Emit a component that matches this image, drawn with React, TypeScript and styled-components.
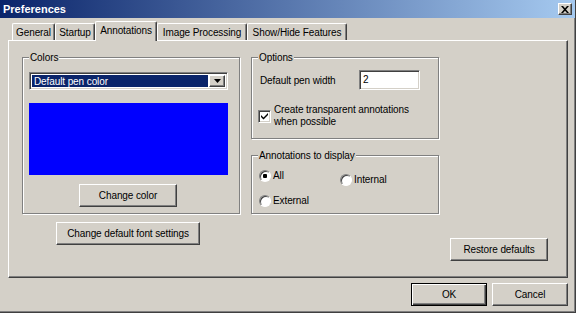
import styled, { createGlobalStyle } from "styled-components";

const GlobalStyle = createGlobalStyle`
  html, body {
    margin: 0;
    padding: 0;
    background: #d4d0c8;
  }
  body {
    font-family: "Liberation Sans", Arial, sans-serif;
    font-size: 10px;
    letter-spacing: -0.1px;
    color: #000;
  }
`;

const raised = `
  border: 1px solid;
  border-color: #fff #404040 #404040 #fff;
  box-shadow: inset -1px -1px 0 #808080;
`;

const sunken = `
  border: 1px solid;
  border-color: #808080 #fff #fff #808080;
  box-shadow: inset 1px 1px 0 #404040, inset -1px -1px 0 #d4d0c8;
`;

const tabs = [
  { label: "General", width: 43 },
  { label: "Startup", width: 40 },
  { label: "Annotations", width: 62, active: true },
  { label: "Image Processing", width: 90 },
  { label: "Show/Hide Features", width: 100 },
];

export default function App() {
  return (
    <>
      <GlobalStyle />
      <Window>
        <TitleBar>
          <Title>Preferences</Title>
          <CloseButton aria-label="Close">
            <svg width="8" height="7" viewBox="0 0 8 7">
              <path d="M0 0h2l2 2.3L6 0h2L5 3.5 8 7H6L4 4.7 2 7H0l3-3.5z" fill="#000" />
            </svg>
          </CloseButton>
        </TitleBar>
        <Body>
          <TabStrip>
            {tabs.map((t) => (
              <Tab key={t.label} $width={t.width} $active={t.active}>
                {t.label}
              </Tab>
            ))}
          </TabStrip>
          <Panel>
            <Column>
              <Group $height={157} $padTop={14}>
                <Legend>Colors</Legend>
                <Select>
                  <SelectValue>Default pen color</SelectValue>
                  <SelectArrow>
                    <svg width="7" height="4" viewBox="0 0 7 4">
                      <path d="M0 0h7L3.5 4z" fill="#000" />
                    </svg>
                  </SelectArrow>
                </Select>
                <Swatch $color="#0000ff" />
                <Button $width={98} $offset={50}>
                  Change color
                </Button>
              </Group>
              <FontButton $width={144} $offset={34}>
                Change default font settings
              </FontButton>
            </Column>
            <Column>
              <Group $height={82} $padTop={12}>
                <Legend>Options</Legend>
                <FieldRow>
                  <FieldLabel>Default pen width</FieldLabel>
                  <TextField>2</TextField>
                </FieldRow>
                <CheckRow>
                  <CheckBox>
                    <svg width="7" height="7" viewBox="0 0 7 7">
                      <path d="M0 2l2.5 2.5L7 0v2L2.5 6.5 0 4z" fill="#000" />
                    </svg>
                  </CheckBox>
                  <CheckText>
                    Create transparent annotations
                    <br />
                    when possible
                  </CheckText>
                </CheckRow>
              </Group>
              <Group $height={59} $padTop={13} $gapTop={16}>
                <Legend>Annotations to display</Legend>
                <RadioGrid>
                  <RadioItem>
                    <Radio $checked />
                    All
                  </RadioItem>
                  <RadioItem $shift={4}>
                    <Radio />
                    Internal
                  </RadioItem>
                  <RadioItem>
                    <Radio />
                    External
                  </RadioItem>
                </RadioGrid>
              </Group>
            </Column>
            <RestoreButton $width={98}>Restore defaults</RestoreButton>
          </Panel>
          <Footer>
            <DefaultButton $width={76}>OK</DefaultButton>
            <Button $width={76}>Cancel</Button>
          </Footer>
        </Body>
      </Window>
    </>
  );
}

const Window = styled.div`
  box-sizing: border-box;
  width: 576px;
  height: 313px;
  display: flex;
  flex-direction: column;
  border-right: 1px solid #404040;
  border-bottom: 1px solid #404040;
  box-shadow: inset -1px -1px 0 #808080;
  background: #d4d0c8;
`;

const TitleBar = styled.div`
  box-sizing: border-box;
  height: 18px;
  padding: 0 3px 0 3px;
  display: flex;
  align-items: center;
  justify-content: space-between;
  background: linear-gradient(to right, #0a246a, #a6caf0);
`;

const Title = styled.span`
  color: #fff;
  font-weight: bold;
  font-size: 11px;
  letter-spacing: 0;
`;

const CloseButton = styled.div`
  box-sizing: border-box;
  width: 14px;
  height: 12px;
  background: #d4d0c8;
  display: flex;
  align-items: center;
  justify-content: center;
  ${raised}
`;

const Body = styled.div`
  padding: 3px 0 0 8px;
  display: flex;
  flex-direction: column;
`;

const TabStrip = styled.div`
  display: flex;
  align-items: flex-end;
  height: 19px;
  padding-left: 4px;
`;

const Tab = styled.div<{ $width: number; $active?: boolean }>`
  box-sizing: border-box;
  position: relative;
  z-index: ${({ $active }) => ($active ? 1 : 0)};
  width: ${({ $width }) => $width}px;
  height: ${({ $active }) => ($active ? 20 : 17)}px;
  margin-bottom: ${({ $active }) => ($active ? -1 : 0)}px;
  padding-bottom: ${({ $active }) => ($active ? 2 : 0)}px;
  display: flex;
  align-items: center;
  justify-content: center;
  background: #d4d0c8;
  border-top: 1px solid #fff;
  border-left: 1px solid #fff;
  border-right: 1px solid #404040;
  border-radius: 2px 2px 0 0;
  box-shadow: inset -1px 0 0 #808080;
  white-space: nowrap;
`;

const Panel = styled.div`
  box-sizing: border-box;
  width: 560px;
  height: 238px;
  padding: 16px 0 16px 13px;
  display: grid;
  grid-template-columns: 218px 188px 98px;
  column-gap: 11px;
  align-items: start;
  border-top: 1px solid #fff;
  border-left: 1px solid #fff;
  border-right: 1px solid #404040;
  border-bottom: 1px solid #404040;
  box-shadow: inset -1px -1px 0 #808080;
`;

const Column = styled.div`
  display: flex;
  flex-direction: column;
`;

const Group = styled.div<{ $height: number; $padTop: number; $gapTop?: number }>`
  box-sizing: border-box;
  position: relative;
  height: ${({ $height }) => $height}px;
  margin-top: ${({ $gapTop }) => $gapTop ?? 0}px;
  padding: ${({ $padTop }) => $padTop}px 6px 0 6px;
  display: flex;
  flex-direction: column;
  border: 1px solid #808080;
  box-shadow: 1px 1px 0 #fff, inset 1px 1px 0 #fff;
`;

const Legend = styled.span`
  position: absolute;
  top: -7px;
  left: 6px;
  padding: 0 1px;
  line-height: 13px;
  background: #d4d0c8;
`;

const Select = styled.div`
  box-sizing: border-box;
  width: 199px;
  height: 18px;
  padding: 2px;
  display: flex;
  background: #fff;
  ${sunken}
`;

const SelectValue = styled.div`
  flex: 1;
  padding-left: 2px;
  margin-right: 1px;
  line-height: 14px;
  color: #fff;
  background: #0a246a;
`;

const SelectArrow = styled.div`
  box-sizing: border-box;
  width: 16px;
  display: flex;
  align-items: center;
  justify-content: center;
  background: #d4d0c8;
  ${raised}
`;

const Swatch = styled.div<{ $color: string }>`
  width: 199px;
  height: 72px;
  margin-top: 13px;
  background: ${({ $color }) => $color};
`;

const Button = styled.div<{ $width: number; $offset?: number }>`
  box-sizing: border-box;
  width: ${({ $width }) => $width}px;
  height: 23px;
  margin-left: ${({ $offset }) => $offset ?? 0}px;
  display: flex;
  align-items: center;
  justify-content: center;
  background: #d4d0c8;
  white-space: nowrap;
  ${raised}

  ${Group} & {
    margin-top: 9px;
  }
`;

const FontButton = styled(Button)`
  margin-top: 8px;
`;

const RestoreButton = styled(Button)`
  align-self: end;
`;

const DefaultButton = styled(Button)`
  border-color: #000;
  box-shadow: inset 1px 1px 0 #fff, inset -1px -1px 0 #404040,
    inset -2px -2px 0 #808080;
`;

const FieldRow = styled.div`
  display: flex;
  align-items: center;
  padding-left: 2px;
`;

const FieldLabel = styled.span`
  width: 99px;
`;

const TextField = styled.div`
  box-sizing: border-box;
  width: 61px;
  height: 20px;
  padding: 0 3px;
  line-height: 18px;
  background: #fff;
  ${sunken}
`;

const CheckRow = styled.div`
  display: flex;
  align-items: center;
  gap: 3px;
  margin-top: 14px;
`;

const CheckBox = styled.div`
  box-sizing: border-box;
  width: 13px;
  height: 13px;
  display: flex;
  align-items: center;
  justify-content: center;
  background: #fff;
  ${sunken}
`;

const CheckText = styled.span`
  line-height: 12px;
`;

const RadioGrid = styled.div`
  display: grid;
  grid-template-columns: 81px auto;
  grid-template-rows: 13px 13px;
  row-gap: 12px;
  padding-left: 1px;
`;

const RadioItem = styled.label<{ $shift?: number }>`
  display: flex;
  align-items: center;
  gap: 1px;
  height: 13px;
  margin-top: ${({ $shift }) => $shift ?? 0}px;
`;

const Radio = styled.span<{ $checked?: boolean }>`
  box-sizing: border-box;
  width: 12px;
  height: 12px;
  border-radius: 50%;
  border: 1px solid;
  border-color: #808080 #fff #fff #808080;
  box-shadow: inset 1px 1px 0 #404040;
  background: ${({ $checked }) =>
    $checked
      ? "radial-gradient(circle, #000 0 2px, #fff 2.5px)"
      : "#fff"};
  margin-right: 1px;
`;

const Footer = styled.div`
  width: 560px;
  display: flex;
  justify-content: flex-end;
  gap: 5px;
  margin-top: 5px;
`;
